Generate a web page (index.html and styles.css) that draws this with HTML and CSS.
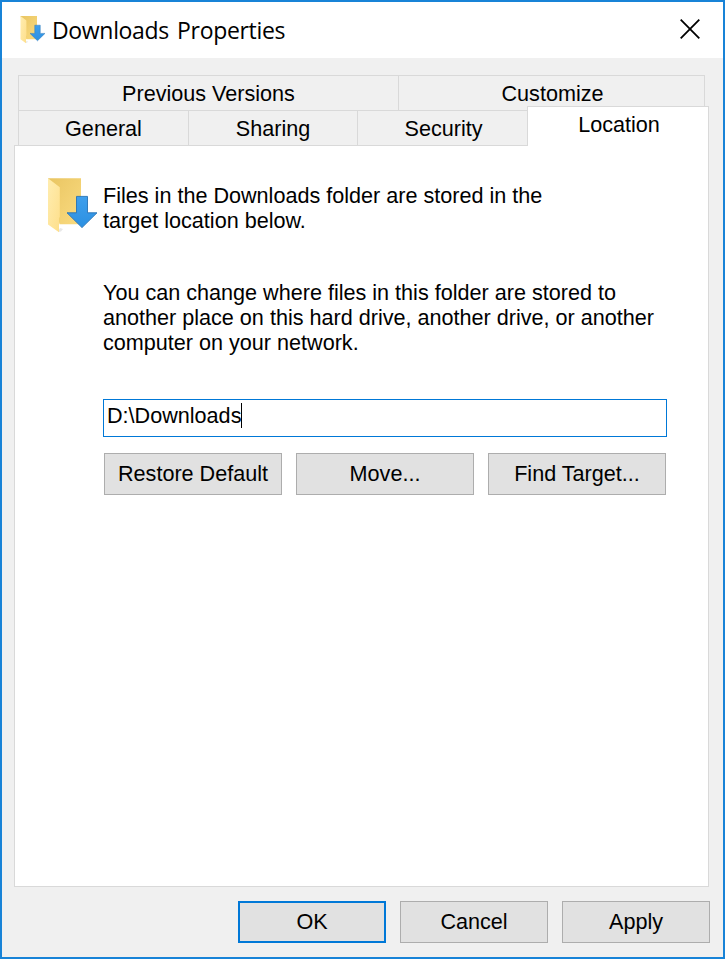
FILE: index.html
```html
<!DOCTYPE html>
<html lang="en">
<head>
<meta charset="utf-8">
<title>Downloads Properties</title>
<link rel="stylesheet" href="styles.css">
</head>
<body>
<svg class="defs" width="0" height="0" aria-hidden="true">
  <defs>
    <linearGradient id="back" x1="0" y1="0" x2="1" y2="1"><stop offset="0" stop-color="#e9c562"/><stop offset="1" stop-color="#fadb80"/></linearGradient>
    <linearGradient id="flap" x1="0" y1="0" x2="1" y2="1"><stop offset="0" stop-color="#ffedb0"/><stop offset="1" stop-color="#fedf8b"/></linearGradient>
    <linearGradient id="arrow" x1="0" y1="0" x2="0" y2="1"><stop offset="0" stop-color="#3f9fec"/><stop offset="1" stop-color="#2b90e2"/></linearGradient>
    <symbol id="downloads" viewBox="0 0 50 56">
      <path d="M10 54 L13 53.4 L15 51 L12 50Z" fill="#e8e8e8"/>
      <path d="M0 .2H33V46.3H11.5Z" fill="url(#back)"/>
      <path d="M0 .2L11.8 9.2V39L11 40V54.3L0 46.5Z" fill="url(#flap)"/>
      <path d="M28.5 18.4H39.5V34.8H49L34 49.6L19 34.8H28.5Z" fill="url(#arrow)" stroke="#2672b4" stroke-width=".9"/>
    </symbol>
  </defs>
</svg>
<main class="dialog">
  <header class="titlebar">
    <svg class="title-icon"><use href="#downloads"/></svg>
    <h1 class="title">Downloads Properties</h1>
    <svg class="close" viewBox="0 0 20 20"><path d="M.7 .7L19.3 19.3M19.3 .7L.7 19.3"/></svg>
  </header>
  <nav class="tabs">
    <div class="tab-row back-row">
      <div class="tab previous"><span>Previous Versions</span></div>
      <div class="tab customize"><span>Customize</span></div>
    </div>
    <div class="tab-row front-row">
      <div class="tab general"><span>General</span></div>
      <div class="tab sharing"><span>Sharing</span></div>
      <div class="tab security"><span>Security</span></div>
      <div class="tab active"><span>Location</span></div>
    </div>
  </nav>
  <section class="panel">
    <svg class="folder-icon"><use href="#downloads"/></svg>
    <div class="content">
      <p class="stored"><span>Files in the Downloads folder are stored in the</span><br><span>target location below.</span></p>
      <p class="change"><span>You can change where files in this folder are stored to</span><br><span>another place on this hard drive, another drive, or another</span><br><span>computer on your network.</span></p>
      <div class="path"><span>D:\Downloads</span><i class="caret"></i></div>
      <div class="actions">
        <button><span>Restore Default</span></button>
        <button><span>Move...</span></button>
        <button><span>Find Target...</span></button>
      </div>
    </div>
  </section>
  <footer class="footer">
    <button class="primary"><span>OK</span></button>
    <button><span>Cancel</span></button>
    <button><span>Apply</span></button>
  </footer>
</main>
</body>
</html>
```
FILE: styles.css
```css
* { box-sizing: border-box; }
body { margin: 0; color: #000; font: 21.6px/25px "Liberation Sans", Arial, sans-serif; }
p, h1 { margin: 0; }
.defs { display: block; }
.dialog { display: flex; flex-direction: column; width: 725px; height: 959px; border: 2px solid #1883d7; background: #f0f0f0; }
.titlebar { display: flex; align-items: center; height: 56px; padding: 0 23px 0 18px; background: #fff; flex: none; }
.title-icon { width: 26px; height: 28px; }
.title { margin-left: 6px; font: 400 23px/30px "Open Sans", "Noto Sans", sans-serif; letter-spacing: -.33px; word-spacing: 2.5px; white-space: nowrap; }
.close { width: 20px; height: 20px; margin: -2px 0 0 auto; fill: none; stroke: #000; stroke-width: 1.8; overflow: visible; }
.tabs { padding: 17px 0 0 16px; flex: none; }
.tab-row { display: flex; }
.back-row { width: 687px; height: 35px; border: 1px solid #d9d9d9; border-bottom: 0; }
.front-row { position: relative; z-index: 1; align-items: flex-end; height: 40px; margin-top: -4px; }
.tab { display: flex; justify-content: center; align-items: center; }
.previous { width: 379px; padding-bottom: 0; }
.customize { flex: 1; border-left: 1px solid #d9d9d9; padding: 0 0 0 2px; }
.front-row .tab { width: 170px; height: 35px; margin-bottom: 1px; padding-top: 1px; border: solid #d9d9d9; border-width: 1px 0 0 1px; }
.front-row .sharing { width: 169px; }
.front-row .security { padding-left: 2px; }
.front-row .active { width: 182px; height: 40px; margin-bottom: 0; padding: 0 0 5px 2px; border-right-width: 1px; background: #fff; }
.panel { display: flex; width: 695px; height: 742px; margin: -1px 0 0 12px; padding: 31px 0 0 33px; border: 1px solid #d9d9d9; background: #fff; flex: none; }
.folder-icon { width: 50px; height: 56px; margin-top: 1px; flex: none; }
.content { width: 564px; margin: 6px 0 0 5px; white-space: nowrap; }
.change { margin-top: 47px; }
.path { display: flex; height: 38px; margin-top: 44px; padding: 3px 3px 0; border: 1px solid #0078d7; }
.caret { width: 1px; height: 25px; background: #000; }
.actions { display: flex; gap: 14px; margin: 16px 1px 0; }
button { display: flex; justify-content: center; align-items: center; width: 148px; height: 42px; padding: 0 0 2px; border: 1px solid #adadad; border-radius: 0; background: #e1e1e1; color: #000; font: inherit; }
.actions button { width: 178px; }
.footer { display: flex; justify-content: flex-end; gap: 14px; padding: 14px 13px 0 0; }
.footer .primary { border: 2px solid #0078d7; }
```
